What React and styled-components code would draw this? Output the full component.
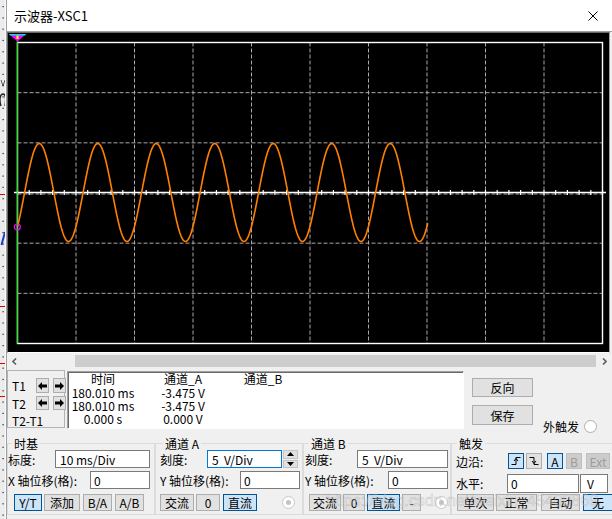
import styled, { createGlobalStyle, css } from 'styled-components'

const GlobalStyle = createGlobalStyle`
  html, body { margin: 0; padding: 0; background: #f0f0f0; overflow: hidden; }
  body {
    font-family: "Noto Sans CJK SC", "Liberation Sans", sans-serif;
    font-size: 12px;
    color: #000;
  }
  * { box-sizing: border-box; }
`

const Page = styled.div`
  display: flex;
  width: 612px;
  height: 519px;
  overflow: hidden;
`

const Backdrop = styled.div`
  width: 6px;
  flex: none;
  background: #ececec;
  svg { display: block; }
`

const Win = styled.div`
  flex: 1;
  min-width: 0;
  display: flex;
  flex-direction: column;
  border-left: 1px solid #a0a0a0;
  background: #f0f0f0;
  overflow: hidden;
`

const TitleBar = styled.div`
  height: 32px;
  flex: none;
  display: flex;
  align-items: center;
  justify-content: space-between;
  padding: 0 14px 0 7px;
  background: #fff;
  border-bottom: 1px solid #a0a0a0;
  font-size: 13px;
`

const Screen = styled.div`
  height: 321px;
  flex: none;
  margin: 0 2px 2px 0;
  background: #000;
  border: 1px solid #696969;
  border-right-color: #a0a0a0;
  border-bottom-color: #fff;
  svg { display: block; }
`

const ScrollBar = styled.div`
  height: 12px;
  flex: none;
  display: flex;
`

const ScrollArrow = styled.div`
  width: ${p => p.$w}px;
  flex: none;
  display: flex;
  align-items: center;
  justify-content: center;
`

const ScrollThumb = styled.div`
  width: 521px;
  flex: none;
  margin-left: 54px;
  background: #cdcdcd;
`

const Panel = styled.div`
  flex: 1;
  position: relative;
  padding-top: 3px;
`

const TopRow = styled.div`
  display: flex;
  align-items: flex-start;
  height: 59px;
`

const CursorPanel = styled.div`
  width: 58px;
  height: 58px;
  flex: none;
  border: 1px solid #b4b4b4;
  padding: 7px 0 0 4px;
  display: grid;
  grid-template-columns: 20px 13px 13px;
  grid-template-rows: 15px 14px 14px;
  column-gap: 4px;
  row-gap: 3px;
  row-gap: 3px 2px;
`

const CursorLabel = styled.span`
  display: flex;
  align-items: center;
  white-space: nowrap;
  ${p => p.$span && css`grid-column: 1 / -1;`}
`

const ArrowBtn = styled.div`
  background: #e1e1e1;
  border: 1px solid #adadad;
  display: flex;
  align-items: center;
  justify-content: center;
`

const DataBox = styled.div`
  width: 397px;
  height: 58px;
  flex: none;
  margin: 1px 0 0 2px;
  padding-left: 1px;
  background: #fff;
  border: 1px solid;
  border-color: #a0a0a0 #fff #fff #a0a0a0;
  box-shadow: inset 1px 1px 0 #696969;
  display: grid;
  grid-template-columns: 68px 92px 68px;
  grid-template-rows: 14px 13px 13px 13px;
  align-content: start;
  line-height: 13px;
`

const DataCell = styled.span`
  text-align: center;
  white-space: nowrap;
  line-height: ${p => (p.$head ? 14 : 13)}px;
`

const SideCol = styled.div`
  width: 61px;
  flex: none;
  margin-left: 8px;
  padding-top: 8px;
  display: flex;
  flex-direction: column;
  gap: 8px;
`

const ExtTrigger = styled.div`
  margin: 50px 0 0 10px;
  height: 13px;
  display: flex;
  align-items: center;
  gap: 5px;
  white-space: nowrap;
`

const Btn = styled.div`
  width: ${p => (p.$w ? `${p.$w}px` : 'auto')};
  height: ${p => (p.$h ? `${p.$h}px` : 'auto')};
  flex: none;
  margin-left: ${p => p.$ml || 0}px;
  display: flex;
  align-items: center;
  justify-content: center;
  white-space: nowrap;
  background: ${p => (p.$sel ? '#cce4f7' : p.$dis ? '#cccccc' : '#e1e1e1')};
  border: 1px solid ${p => (p.$sel ? '#005499' : p.$dis ? '#bfbfbf' : '#adadad')};
  color: ${p => (p.$dis ? '#9c9c9c' : '#000')};
`

const Radio = styled.span`
  width: 13px;
  height: 13px;
  flex: none;
  align-self: center;
  margin-left: ${p => p.$ml || 0}px;
  position: relative;
  border-radius: 50%;
  background: #fff;
  border: 1px solid ${p => (p.$dis ? '#c8c8c8' : '#b0b0b0')};
  ${p => p.$dot && css`
    &::after {
      content: '';
      position: absolute;
      inset: 3px;
      border-radius: 50%;
      background: #c4c4c4;
    }
  `}
`

const Groups = styled.div`
  display: flex;
  align-items: flex-start;
  margin-top: 8px;
`

const Group = styled.fieldset`
  width: ${p => p.$w}px;
  flex: none;
  min-width: 0;
  margin: 0;
  padding: 0 0 3px 0;
  border: 1px solid #dcdcdc;
`

const GroupTitle = styled.legend`
  margin-left: ${p => p.$ml}px;
  padding: 0 2px;
  font-size: 12px;
  line-height: 13px;
`

const FieldRow = styled.div`
  display: flex;
  align-items: stretch;
  height: ${p => p.$h}px;
  margin-top: ${p => p.$mt || 0}px;
  padding-left: ${p => p.$pl || 0}px;
`

const FieldLabel = styled.span`
  width: ${p => p.$w}px;
  flex: none;
  display: flex;
  align-items: center;
  white-space: nowrap;
`

const TextBox = styled.div`
  width: ${p => p.$w}px;
  flex: none;
  margin-left: ${p => p.$ml || 0}px;
  padding-left: ${p => p.$pl ?? 4}px;
  display: flex;
  align-items: center;
  white-space: pre;
  background: #fff;
  border: 1px solid ${p => (p.$focus ? '#0078d7' : '#7a7a7a')};
`

const Spinner = styled.div`
  width: 15px;
  flex: none;
  margin-left: 1px;
  display: flex;
  flex-direction: column;
  gap: 1px;
`

const SpinBtn = styled.div`
  flex: 1;
  display: flex;
  align-items: center;
  justify-content: center;
  background: #e1e1e1;
  border: 1px solid #c4c4c4;
`

const Watermark = styled.span`
  position: absolute;
  left: 319px;
  top: 124px;
  font-family: "Liberation Sans", Arial, sans-serif;
  font-size: 16px;
  line-height: 20px;
  white-space: nowrap;
  color: rgba(235, 235, 235, 0.35);
  -webkit-text-stroke: 0.6px rgba(140, 140, 140, 0.35);
  pointer-events: none;
`

// screen geometry (svg coords, origin at the black area's top-left)
const L = 9.5
const R = 594.5
const T = 9.5
const B = 310.5
const DX = (R - L) / 10
const DY = (B - T) / 6
const MID = 159.5

const wave = (() => {
  const pts = []
  for (let x = 9.3; x <= 420; x += 0.5) {
    const y = MID - 49 * Math.sin((2 * Math.PI * (x + 8 - 24.6)) / 58.5)
    pts.push(`${x.toFixed(1)},${y.toFixed(1)}`)
  }
  return pts.join(' ')
})()

const ScopeDisplay = () => (
  <svg width="601" height="319" viewBox="0 0 601 319">
    {Array.from({ length: 9 }, (_, i) => (
      <line key={`v${i}`} x1={L + DX * (i + 1)} y1={T} x2={L + DX * (i + 1)} y2={B}
        stroke="#a8a8a8" strokeDasharray="4 2" />
    ))}
    {Array.from({ length: 5 }, (_, j) => (
      <line key={`h${j}`} x1={L} y1={T + DY * (j + 1) + (j === 2 ? 1 : 0)} x2={R} y2={T + DY * (j + 1) + (j === 2 ? 1 : 0)}
        stroke="#a8a8a8" strokeDasharray="4 2" />
    ))}
    <rect x={L} y={T} width={R - L} height={B - T} fill="none" stroke="#fff" strokeWidth="1.4" />
    <line x1="6" y1={MID} x2="598" y2={MID} stroke="#fff" strokeWidth="1.6" />
    {Array.from({ length: 51 }, (_, k) => (
      <line key={`t${k}`} x1={L + 11.7 * k} y1={MID - 2.5} x2={L + 11.7 * k} y2={MID + 2.5}
        stroke="#fff" strokeWidth="1.2" />
    ))}
    <polyline points={wave} fill="none" stroke="#ff8000" strokeWidth="1.6" strokeLinejoin="round" />
    <line x1="9.3" y1="8" x2="9.3" y2={B} stroke="#22dd22" strokeWidth="1.2" />
    <circle cx="9.3" cy="194" r="3" fill="none" stroke="#ff00ff" strokeWidth="1.2" />
    <polygon points="1,1 18,1 9.5,8.5" fill="#ff00ff" />
    <polygon points="1,1 18,1 17,2.5 2,2.5" fill="#00e0e0" />
    <rect x="8.5" y="2.5" width="2" height="3.5" fill="#ffff00" />
  </svg>
)

const BackdropArt = () => (
  <svg width="6" height="519" viewBox="0 0 6 519">
    {Array.from({ length: 46 }, (_, i) => (
      <rect key={i} x="2.5" y={6 + i * 11.3} width="1.2" height="1.2" fill="#222" />
    ))}
    {[194, 306, 363, 396].map(y => (
      <rect key={y} x="0" y={y} width="6" height="1" fill="#e00000" />
    ))}
    <polyline points="1,80 3,86 5,80" fill="none" stroke="#333" strokeWidth="0.8" />
    <path d="M1 106 C-1 100 0 94 3 94 C6 94 6 100 5 106" fill="none" stroke="#222" strokeWidth="1.4" />
    <line x1="1.5" y1="245" x2="5" y2="232" stroke="#1a3ccf" strokeWidth="2" />
    <rect x="5" y="0" width="1" height="519" fill="#fafafa" />
  </svg>
)

const CloseIcon = () => (
  <svg width="10" height="10" viewBox="0 0 10 10">
    <path d="M0.5 0.5 L9.5 9.5 M9.5 0.5 L0.5 9.5" stroke="#000" strokeWidth="1" />
  </svg>
)

const Chevron = ({ right }) => (
  <svg width="5" height="7" viewBox="0 0 5 7">
    <path d={right ? 'M1 0.5 L4 3.5 L1 6.5' : 'M4 0.5 L1 3.5 L4 6.5'} fill="none" stroke="#606060" strokeWidth="1.6" />
  </svg>
)

const Arrow = ({ right }) => (
  <svg width="9" height="8" viewBox="0 0 9 8">
    <path d="M0 4 L4 0 V2.5 H9 V5.5 H4 V8 Z" fill="#000"
      transform={right ? 'matrix(-1 0 0 1 9 0)' : undefined} />
  </svg>
)

const SpinArrow = ({ down }) => (
  <svg width="7" height="4" viewBox="0 0 7 4">
    <path d={down ? 'M0 0 H7 L3.5 4 Z' : 'M0 4 H7 L3.5 0 Z'} fill="#000" />
  </svg>
)

const EdgeIcon = ({ fall }) => (
  <svg width="10" height="10" viewBox="0 0 10 10">
    <path d={fall ? 'M0.5 1.5 H5 V8.5 H9.5' : 'M0.5 8.5 H5 V1.5 H9.5'} fill="none" stroke="#000" />
    <path d={fall ? 'M3 5 L5 7.5 L7 5' : 'M3 5 L5 2.5 L7 5'} fill="none" stroke="#000" />
  </svg>
)

const readings = [
  ['180.010 ms', '-3.475 V', ''],
  ['180.010 ms', '-3.475 V', ''],
  ['0.000 s', '0.000 V', ''],
]

export default function App() {
  return (
    <Page>
      <GlobalStyle />
      <Backdrop><BackdropArt /></Backdrop>
      <Win>
        <TitleBar>
          <span>示波器-XSC1</span>
          <CloseIcon />
        </TitleBar>
        <Screen><ScopeDisplay /></Screen>
        <ScrollBar>
          <ScrollArrow $w={14}><Chevron /></ScrollArrow>
          <ScrollThumb />
          <ScrollArrow $w={16}><Chevron right /></ScrollArrow>
        </ScrollBar>
        <Panel>
          <TopRow>
            <CursorPanel>
              <CursorLabel>T1</CursorLabel>
              <ArrowBtn><Arrow /></ArrowBtn>
              <ArrowBtn><Arrow right /></ArrowBtn>
              <CursorLabel>T2</CursorLabel>
              <ArrowBtn><Arrow /></ArrowBtn>
              <ArrowBtn><Arrow right /></ArrowBtn>
              <CursorLabel $span>T2-T1</CursorLabel>
            </CursorPanel>
            <DataBox>
              <DataCell $head>时间</DataCell>
              <DataCell $head>通道_A</DataCell>
              <DataCell $head>通道_B</DataCell>
              {readings.map((r, i) => r.map((v, j) => <DataCell key={`${i}-${j}`}>{v}</DataCell>))}
            </DataBox>
            <SideCol>
              <Btn $h={19}>反向</Btn>
              <Btn $h={20}>保存</Btn>
            </SideCol>
            <ExtTrigger>
              <span>外触发</span>
              <Radio />
            </ExtTrigger>
          </TopRow>

          <Groups>
            <Group $w={148}>
              <GroupTitle $ml={4}>时基</GroupTitle>
              <FieldRow $h={18}>
                <FieldLabel $w={47}>标度:</FieldLabel>
                <TextBox $w={95}>10 ms/Div</TextBox>
              </FieldRow>
              <FieldRow $h={18} $mt={3}>
                <FieldLabel $w={82}>X 轴位移(格):</FieldLabel>
                <TextBox $w={60} $pl={3}>0</TextBox>
              </FieldRow>
              <FieldRow $h={17} $mt={5} $pl={6}>
                <Btn $w={28} $sel>Y/T</Btn>
                <Btn $w={36} $ml={2}>添加</Btn>
                <Btn $w={29} $ml={3}>B/A</Btn>
                <Btn $w={29} $ml={3}>A/B</Btn>
              </FieldRow>
            </Group>

            <Group $w={148}>
              <GroupTitle $ml={7}>通道 A</GroupTitle>
              <FieldRow $h={18} $pl={4}>
                <FieldLabel $w={47}>刻度:</FieldLabel>
                <TextBox $w={75} $focus>5  V/Div</TextBox>
                <Spinner>
                  <SpinBtn><SpinArrow /></SpinBtn>
                  <SpinBtn><SpinArrow down /></SpinBtn>
                </Spinner>
              </FieldRow>
              <FieldRow $h={18} $mt={3} $pl={4}>
                <FieldLabel $w={80}>Y 轴位移(格):</FieldLabel>
                <TextBox $w={60} $pl={3}>0</TextBox>
              </FieldRow>
              <FieldRow $h={17} $mt={5} $pl={4}>
                <Btn $w={34}>交流</Btn>
                <Btn $w={24} $ml={2}>0</Btn>
                <Btn $w={34} $ml={3} $sel>直流</Btn>
                <Radio $ml={25} $dis $dot />
              </FieldRow>
            </Group>

            <Group $w={148}>
              <GroupTitle $ml={5}>通道 B</GroupTitle>
              <FieldRow $h={18} $pl={1}>
                <FieldLabel $w={52}>刻度:</FieldLabel>
                <TextBox $w={91}>5  V/Div</TextBox>
              </FieldRow>
              <FieldRow $h={18} $mt={3} $pl={1}>
                <FieldLabel $w={83}>Y 轴位移(格):</FieldLabel>
                <TextBox $w={60} $pl={3}>0</TextBox>
              </FieldRow>
              <FieldRow $h={17} $mt={5} $pl={5}>
                <Btn $w={32}>交流</Btn>
                <Btn $w={22} $ml={2}>0</Btn>
                <Btn $w={33} $ml={2} $sel>直流</Btn>
                <Btn $w={19} $ml={2}>-</Btn>
                <Radio $ml={14} $dis $dot />
              </FieldRow>
            </Group>

            <Group $w={170}>
              <GroupTitle $ml={5}>触发</GroupTitle>
              <FieldRow $h={16} $mt={3} $pl={4}>
                <FieldLabel $w={52}>边沿:</FieldLabel>
                <Btn $w={16} $sel><EdgeIcon /></Btn>
                <Btn $w={16} $ml={2}><EdgeIcon fall /></Btn>
                <Btn $w={16} $ml={5} $sel>A</Btn>
                <Btn $w={16} $ml={3} $dis>B</Btn>
                <Btn $w={24} $ml={4} $dis>Ext</Btn>
              </FieldRow>
              <FieldRow $h={19} $mt={5} $pl={4}>
                <FieldLabel $w={51}>水平:</FieldLabel>
                <TextBox $w={72} $pl={3}>0</TextBox>
                <TextBox $w={28} $ml={1} $pl={6}>V</TextBox>
              </FieldRow>
              <FieldRow $h={17} $mt={1} $pl={5}>
                <Btn $w={37}>单次</Btn>
                <Btn $w={41} $ml={2}>正常</Btn>
                <Btn $w={39} $ml={4}>自动</Btn>
                <Btn $w={30} $ml={3} $sel>无</Btn>
              </FieldRow>
            </Group>
          </Groups>
          <Watermark>https://blog.csdn.net/weixin_45400869</Watermark>
        </Panel>
      </Win>
    </Page>
  )
}
